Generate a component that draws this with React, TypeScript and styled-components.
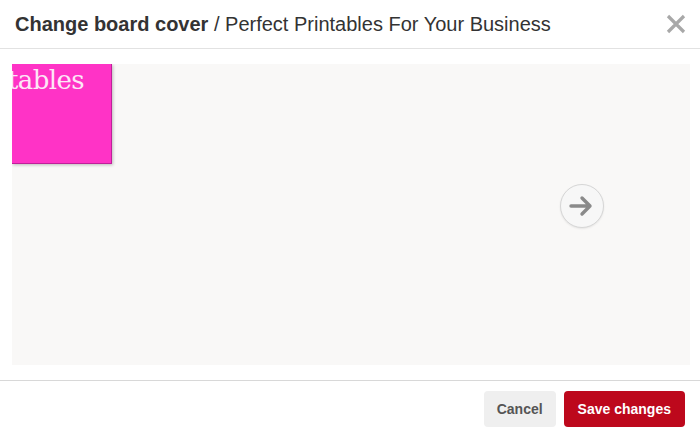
import React, { FC } from 'react';
import styled, { createGlobalStyle } from 'styled-components';

const GlobalStyle = createGlobalStyle`
  html, body {
    margin: 0;
    padding: 0;
    background: #ffffff;
    font-family: "Liberation Sans", Arial, sans-serif;
  }
`;

const Modal = styled.div`
  width: 700px;
  height: 435px;
  display: flex;
  flex-direction: column;
  background: #ffffff;
  overflow: hidden;
`;

const Header = styled.div`
  height: 49px;
  box-sizing: border-box;
  display: flex;
  align-items: center;
  justify-content: space-between;
  padding: 0 12px 0 15px;
  border-bottom: 1px solid #e2e2e2;
`;

const Title = styled.h1`
  margin: 0;
  font-size: 20px;
  font-weight: normal;
  color: #333333;
  letter-spacing: 0;
`;

const Strong = styled.span`
  font-weight: bold;
`;

const CloseButton = styled.button`
  width: 24px;
  height: 24px;
  border: none;
  background: none;
  padding: 0;
  display: flex;
  align-items: center;
  justify-content: center;
  cursor: pointer;
`;

const Body = styled.div`
  flex: 1;
  padding: 15px 10px 15px 12px;
  box-sizing: border-box;
  display: flex;
`;

const Preview = styled.div`
  flex: 1;
  background: #f9f8f7;
  position: relative;
  overflow: hidden;
`;

const Cover = styled.div`
  width: 99px;
  height: 99px;
  background: #ff33c6;
  border-right: 1px solid #c0209a;
  border-bottom: 1px solid #c0209a;
  box-shadow: 1px 1px 3px rgba(0, 0, 0, 0.25);
  overflow: hidden;
  position: relative;
`;

const CoverText = styled.span`
  position: absolute;
  left: -4px;
  top: 3px;
  font-family: "DejaVu Serif", "Liberation Serif", serif;
  font-size: 26px;
  line-height: 1;
  letter-spacing: -0.6px;
  color: #fde6f6;
  white-space: nowrap;
`;

const NextButton = styled.button`
  position: absolute;
  left: 548px;
  top: 120px;
  width: 44px;
  height: 44px;
  border-radius: 50%;
  border: 1px solid #d6d6d6;
  background: #f7f7f7;
  box-shadow: 0 1px 2px rgba(0, 0, 0, 0.08);
  display: flex;
  align-items: center;
  justify-content: center;
  padding: 0;
  cursor: pointer;
`;

const Footer = styled.div`
  border-top: 1px solid #d8d8d8;
  height: 55px;
  box-sizing: border-box;
  display: flex;
  align-items: flex-start;
  justify-content: flex-end;
  gap: 8px;
  padding: 10px 15px 0 0;
`;

const Button = styled.button<{ $primary?: boolean }>`
  height: 36px;
  padding: 0 ${(p) => (p.$primary ? '14px' : '13px')};
  border: none;
  border-radius: 4px;
  font-family: "Liberation Sans", Arial, sans-serif;
  font-size: 14px;
  font-weight: bold;
  background: ${(p) => (p.$primary ? '#bd081c' : '#efefef')};
  color: ${(p) => (p.$primary ? '#ffffff' : '#555555')};
  cursor: pointer;
`;

export default function App() {
  return (
    <Modal>
      <GlobalStyle />
      <Header>
        <Title>
          <Strong>Change board cover</Strong> / Perfect Printables For Your Business
        </Title>
        <CloseButton aria-label="Close">
          <svg width="20" height="20" viewBox="0 0 20 20">
            <path d="M2 2 L18 18 M18 2 L2 18" stroke="#a8a8a8" strokeWidth="3.2" strokeLinecap="butt" />
          </svg>
        </CloseButton>
      </Header>
      <Body>
        <Preview>
          <Cover>
            <CoverText>tables</CoverText>
          </Cover>
          <NextButton aria-label="Next">
            <svg width="26" height="22" viewBox="0 0 26 22">
              <path d="M2 11 H21 M13 3 L21 11 L13 19" fill="none" stroke="#8a8a8a" strokeWidth="3.4" strokeLinecap="round" strokeLinejoin="round" />
            </svg>
          </NextButton>
        </Preview>
      </Body>
      <Footer>
        <Button>Cancel</Button>
        <Button $primary>Save changes</Button>
      </Footer>
    </Modal>
  );
}
